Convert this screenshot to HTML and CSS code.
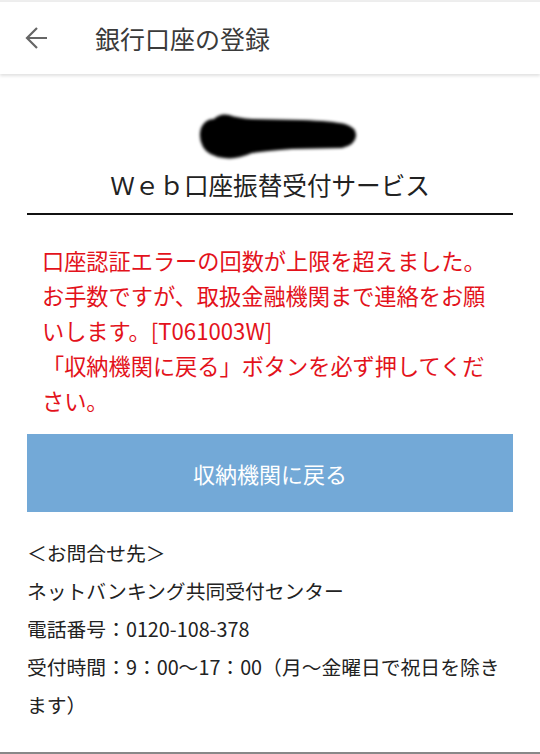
FILE: index.html
```html
<!DOCTYPE html>
<html lang="ja">
<head>
<meta charset="UTF-8">
<title>銀行口座の登録</title>
<link rel="stylesheet" href="styles.css">
</head>
<body>
	<div id="page">
		<div class="statusline"></div>
		<header class="appbar">
			<button class="back" aria-label="戻る">
				<svg width="24" height="24" viewBox="0 0 24 24">
					<path d="M22 12H2.5M12 2 2 12l10 10" fill="none" stroke="#666" stroke-width="2.2" stroke-linejoin="miter"/>
				</svg>
			</button>
			<h1>銀行口座の登録</h1>
		</header>
		<main class="content">
			<svg class="masked" width="180" height="52" viewBox="0 0 180 52">
				<defs>
					<filter id="soft" x="-10%" y="-30%" width="120%" height="160%">
						<feGaussianBlur stdDeviation="1.8"/>
					</filter>
				</defs>
				<path filter="url(#soft)" fill="#000" d="M21 18 Q25 9 34 9 Q40 3 49 5 Q58 8 72 9 L122 10 Q152 11 165 14 Q177 18 176 26 Q175 35 162 38 L112 39 Q86 41 72 43 Q56 50 44 48 Q28 46 23 37 Q18 28 21 18 Z"/>
			</svg>
			<h2 class="service">Ｗｅｂ口座振替受付サービス</h2>
			<hr class="rule">
			<p class="error">口座認証エラーの回数が上限を超えました。お手数ですが、取扱金融機関まで連絡をお願いします。[T061003W]<br>「収納機関に戻る」ボタンを必ず押してください。</p>
			<button class="return">収納機関に戻る</button>
			<div class="contact">
				<p>＜お問合せ先＞</p>
				<p>ネットバンキング共同受付センター</p>
				<p>電話番号：0120-108-378</p>
				<p>受付時間：9：00〜17：00（月〜金曜日で祝日を除きます）</p>
			</div>
		</main>
		<div class="navedge"></div>
	</div>
</body>
</html>
```
FILE: styles.css
```css
html, body { margin: 0; padding: 0; background: #fff; }
body { font-family: "Noto Sans CJK JP", "Noto Sans", sans-serif; color: #222; }
#page { width: 540px; height: 754px; display: flex; flex-direction: column; overflow: hidden; }
.statusline { height: 2px; background: #eeeeee; flex: none; }
.appbar { height: 72px; flex: none; display: flex; align-items: center; background: #fff; box-shadow: 0 2px 3px rgba(0, 0, 0, 0.12); position: relative; z-index: 1; }
.back { width: 24px; height: 24px; margin-left: 25px; padding: 0; border: none; background: none; display: flex; }
.appbar h1 { margin: 0 0 0 46px; font-size: 25px; font-weight: 400; color: #3a3a3a; line-height: 1; }
.content { flex: 1; padding: 0 27px; }
.masked { display: block; margin: 36px auto 0; }
.service { margin: 7px 0 0; font-size: 24.6px; font-weight: 400; line-height: 30px; text-align: center; color: #222; }
.rule { margin: 14px 0 0; height: 2px; border: none; background: #111; }
.error { margin: 28px 0 0; padding: 0 14px 0 15px; font-size: 22.2px; line-height: 35px; color: #e3121b; }
.return { display: block; width: 100%; height: 78px; margin-top: 16px; border: none; background: #73a9d7; color: #fff; font-family: inherit; font-size: 22px; padding: 0; }
.contact { margin-top: 22px; padding-right: 12px; font-size: 19.8px; line-height: 38px; color: #222; }
.contact p { margin: 0; }
.navedge { height: 2px; background: #888; flex: none; }
```
